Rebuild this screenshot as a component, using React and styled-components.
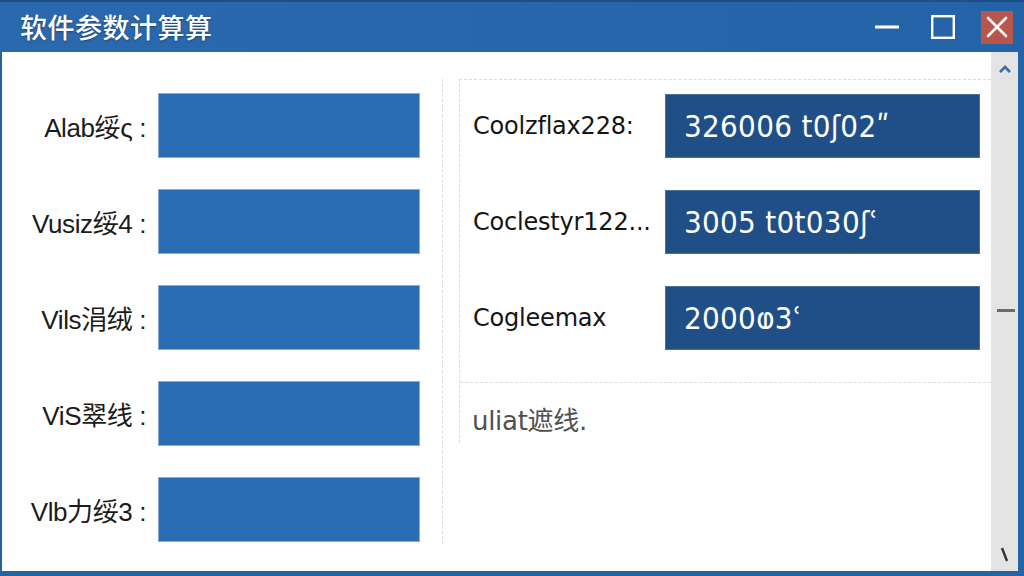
import React from "react";
import styled, { createGlobalStyle } from "styled-components";

const GlobalStyle = createGlobalStyle`
  html, body {
    margin: 0;
    padding: 0;
    background: #2566aa;
  }
  body {
    font-family: "Noto Sans", "Noto Sans CJK SC", sans-serif;
  }
`;

const Window = styled.div`
  width: 1024px;
  height: 576px;
  display: flex;
  flex-direction: column;
  background: #2463a6;
  border-top: 2px solid #1d4f82;
  box-sizing: border-box;
  overflow: hidden;
`;

const TitleBar = styled.div`
  height: 50px;
  display: flex;
  align-items: center;
  padding: 0 11px 0 20px;
  background: linear-gradient(90deg, #2a69ad 0%, #2766ac 50%, #2563a8 100%);
`;

const Title = styled.div`
  flex: 1;
  color: #fff;
  font-family: "Noto Sans CJK SC", sans-serif;
  font-size: 27px;
  font-weight: 500;
  letter-spacing: 0.5px;
  text-shadow: 0 1px 2px rgba(0, 0, 0, 0.35);
  margin-top: -2px;
`;

const Controls = styled.div`
  display: flex;
  align-items: center;
`;

const CtrlButton = styled.div`
  width: ${(p) => p.$w || 46}px;
  height: 33px;
  display: flex;
  align-items: center;
  justify-content: center;
  background: ${(p) => (p.$close ? "#b9564c" : "transparent")};
  margin-left: ${(p) => p.$ml || 0}px;
`;

const ClientArea = styled.div`
  flex: 1;
  display: flex;
  margin: 0 6px 5px 2px;
  background: #fff;
`;

const Content = styled.div`
  flex: 1;
  display: flex;
  align-items: flex-start;
  padding-top: 27px;
`;

const LeftPanel = styled.div`
  width: 441px;
  box-sizing: border-box;
  border-right: 1px dashed #dcdcdc;
  padding: 14px 0 2px;
  display: grid;
  grid-template-columns: 144px 262px;
  grid-auto-rows: 65px;
  column-gap: 12px;
  row-gap: 31px;
  align-items: center;
`;

const LeftLabel = styled.div`
  text-align: right;
  font-family: "Liberation Sans", "Noto Sans CJK SC", sans-serif;
  font-size: 26px;
  color: #1b1b1b;
  letter-spacing: -0.4px;
  white-space: nowrap;
`;

const FieldBox = styled.div`
  height: 100%;
  box-sizing: border-box;
  background: ${(p) => (p.$dark ? "#1f4f86" : "#2a6db4")};
  border: 1px solid ${(p) => (p.$dark ? "#4a6f98" : "#8aaad0")};
  display: flex;
  align-items: center;
  padding-left: 18px;
  color: #fff;
  font-family: "DejaVu Sans", sans-serif;
  font-stretch: condensed;
  font-size: 31px;
  letter-spacing: 0.3px;
  white-space: nowrap;
`;

const RightPanel = styled.div`
  flex: 1;
  margin-left: 16px;
  border-left: 1px dashed #dcdcdc;
  border-top: 1px dashed #dcdcdc;
`;

const RightRows = styled.div`
  display: grid;
  grid-template-columns: 192px 315px;
  grid-auto-rows: 64px;
  row-gap: 32px;
  padding: 14px 10px 32px 13px;
  align-items: center;
`;

const RightLabel = styled.div`
  font-family: "DejaVu Sans", sans-serif;
  font-size: 24px;
  letter-spacing: -0.2px;
  color: #151515;
  white-space: nowrap;
`;

const Footer = styled.div`
  border-top: 1px dashed #dcdcdc;
  height: 61px;
  padding: 17px 0 0 12px;
  box-sizing: border-box;
  font-family: "DejaVu Sans", "Noto Sans CJK SC", sans-serif;
  font-size: 26px;
  letter-spacing: -0.3px;
  color: #505050;
`;

const Scrollbar = styled.div`
  width: 27px;
  background: #e4e4e4;
  display: flex;
  flex-direction: column;
  align-items: center;
  justify-content: space-between;
  padding: 12px 0 8px;
  box-sizing: border-box;
`;

const Thumb = styled.div`
  width: 18px;
  height: 3px;
  background: #6b6b6b;
  margin-left: 3px;
`;

const leftRows = [
  "Alab绥ς :",
  "Vusiz绥4 :",
  "Vils涓绒 :",
  "ViS翠线 :",
  "Vlb力绥3 :",
];

const rightRows = [
  { label: "Coolzflax228:", value: "326006 t0ʃ02ʺ" },
  { label: "Coclestyr122...", value: "3005 t0t030ʃʿ" },
  { label: "Cogleemax", value: "2000ⱷ3ʿ" },
];

export default function App() {
  return (
    <>
      <GlobalStyle />
      <Window>
        <TitleBar>
          <Title>软件参数计算算</Title>
          <Controls>
            <CtrlButton $w={24}>
              <svg width="24" height="4" viewBox="0 0 24 4">
                <rect x="0" y="0.5" width="24" height="3" fill="#fff" />
              </svg>
            </CtrlButton>
            <CtrlButton $w={24} $ml={32}>
              <svg width="24" height="24" viewBox="0 0 24 24">
                <rect x="1.2" y="1.2" width="21.6" height="21.6" fill="none" stroke="#fff" strokeWidth="2.4" />
              </svg>
            </CtrlButton>
            <CtrlButton $w={32} $ml={26} $close>
              <svg width="22" height="22" viewBox="0 0 22 22">
                <path d="M2 2 L20 20 M20 2 L2 20" stroke="#fff" strokeWidth="2.6" strokeLinecap="round" />
              </svg>
            </CtrlButton>
          </Controls>
        </TitleBar>
        <ClientArea>
          <Content>
            <LeftPanel>
              {leftRows.map((l) => (
                <React.Fragment key={l}>
                  <LeftLabel>{l}</LeftLabel>
                  <FieldBox />
                </React.Fragment>
              ))}
            </LeftPanel>
            <RightPanel>
              <RightRows>
                {rightRows.map((r) => (
                  <React.Fragment key={r.label}>
                    <RightLabel>{r.label}</RightLabel>
                    <FieldBox $dark>{r.value}</FieldBox>
                  </React.Fragment>
                ))}
              </RightRows>
              <Footer>uliat遮线.</Footer>
            </RightPanel>
          </Content>
          <Scrollbar>
            <svg width="14" height="10" viewBox="0 0 14 10">
              <path d="M2 8 L7 3 L12 8" fill="none" stroke="#3d6fa6" strokeWidth="2.8" />
            </svg>
            <Thumb />
            <svg width="10" height="16" viewBox="0 0 10 16">
              <path d="M2 1 L7 14" fill="none" stroke="#333" strokeWidth="2.4" />
            </svg>
          </Scrollbar>
        </ClientArea>
      </Window>
    </>
  );
}
